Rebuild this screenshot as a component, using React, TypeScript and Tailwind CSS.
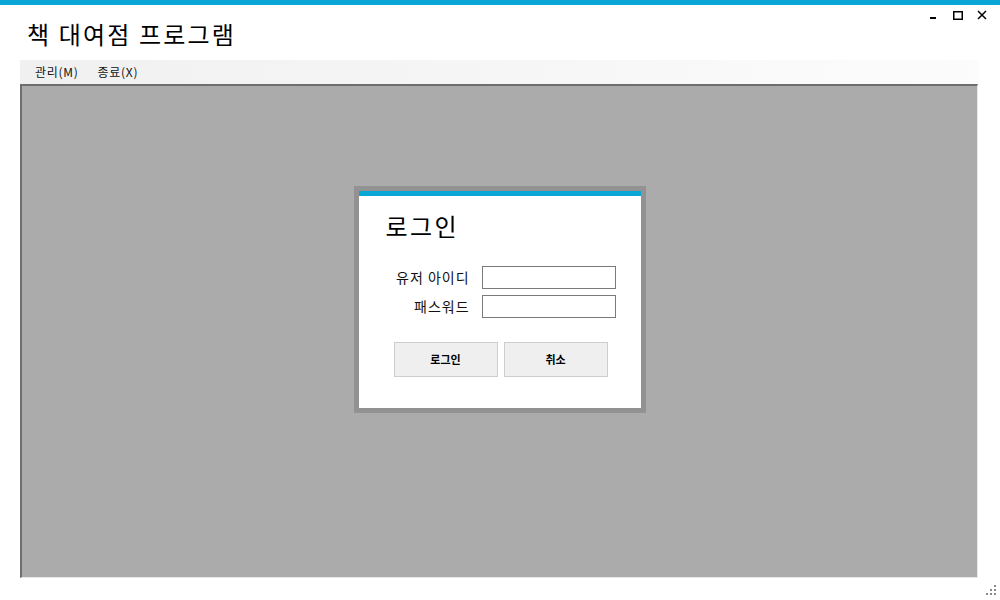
import React from 'react';

const font = { fontFamily: '"Noto Sans CJK KR", "Noto Sans", sans-serif' };

const WindowControls: React.FC = () => (
  <div className="absolute top-[9px] right-[12px] flex items-center gap-[12px]">
    <svg width="12" height="12" viewBox="0 0 12 12">
      <rect x="2" y="8" width="6" height="2" fill="#000" />
    </svg>
    <svg width="12" height="12" viewBox="0 0 12 12">
      <rect x="1.75" y="2.75" width="8.5" height="7.5" fill="none" stroke="#000" strokeWidth="1.5" />
    </svg>
    <svg width="12" height="12" viewBox="0 0 12 12">
      <path d="M2 2 L10 10 M10 2 L2 10" stroke="#000" strokeWidth="1.5" />
    </svg>
  </div>
);

const ResizeGrip: React.FC = () => (
  <svg className="absolute right-[3px] bottom-[4px]" width="12" height="12" viewBox="0 0 12 12">
    {[
      [8, 0],
      [4, 4],
      [8, 4],
      [0, 8],
      [4, 8],
      [8, 8],
    ].map(([x, y]) => (
      <rect key={`${x}-${y}`} x={x + 1} y={y + 1} width="2" height="2" fill="#8a8a8a" />
    ))}
  </svg>
);

const LoginDialog: React.FC = () => (
  <div className="border-[5px] border-[#929292] w-[292px]">
    <div className="bg-white flex flex-col">
      <div className="h-[5px] bg-[#0aa6d6]" />
      <div className="pl-[27px] mt-[14px] text-[24px] leading-[32px] tracking-[0.1em] text-black">로그인</div>
      <div className="mt-[24px] flex flex-col gap-[6px]">
        {['유저 아이디', '패스워드'].map((label) => (
          <div key={label} className="flex items-center">
            <div className="w-[111px] text-right text-[14px] tracking-[0.07em] text-[#111]">{label}</div>
            <input
              type={label === '패스워드' ? 'password' : 'text'}
              className="ml-[12px] w-[134px] h-[23px] border border-[#7a7a7a] bg-white outline-none"
            />
          </div>
        ))}
      </div>
      <div className="mt-[24px] mb-[31px] pl-[35px] flex gap-[6px]">
        {['로그인', '취소'].map((b) => (
          <button
            key={b}
            className="w-[104px] h-[35px] bg-[#efefef] border border-[#cdcdcd] text-[11px] font-bold text-black"
            style={font}
          >
            {b}
          </button>
        ))}
      </div>
    </div>
  </div>
);

export default function App() {
  return (
    <div className="relative w-[1000px] h-[600px] bg-white flex flex-col" style={font}>
      <div className="h-[5px] bg-[#0aa6d6]" />
      <WindowControls />
      <div className="h-[55px] pl-[27px] pt-[13px] text-[24px] leading-[32px] tracking-[0.09em] text-black">
        책 대여점 프로그램
      </div>
      <div className="ml-[20px] w-[958px] h-[24px] flex items-center pl-[15px] gap-[19px] text-[12px] tracking-[0.06em] text-[#111] bg-gradient-to-r from-[#f0f0f0] to-[#fcfcfc]">
        <span>관리(M)</span>
        <span>종료(X)</span>
      </div>
      <div className="ml-[20px] w-[958px] h-[494px] bg-[#ababab] border-t-2 border-l-2 border-t-[#6e6e6e] border-l-[#6e6e6e] border-r border-b border-r-[#e6e6e6] border-b-[#e6e6e6] flex justify-center pt-[100px]">
        <div>
          <LoginDialog />
        </div>
      </div>
      <ResizeGrip />
    </div>
  );
}
